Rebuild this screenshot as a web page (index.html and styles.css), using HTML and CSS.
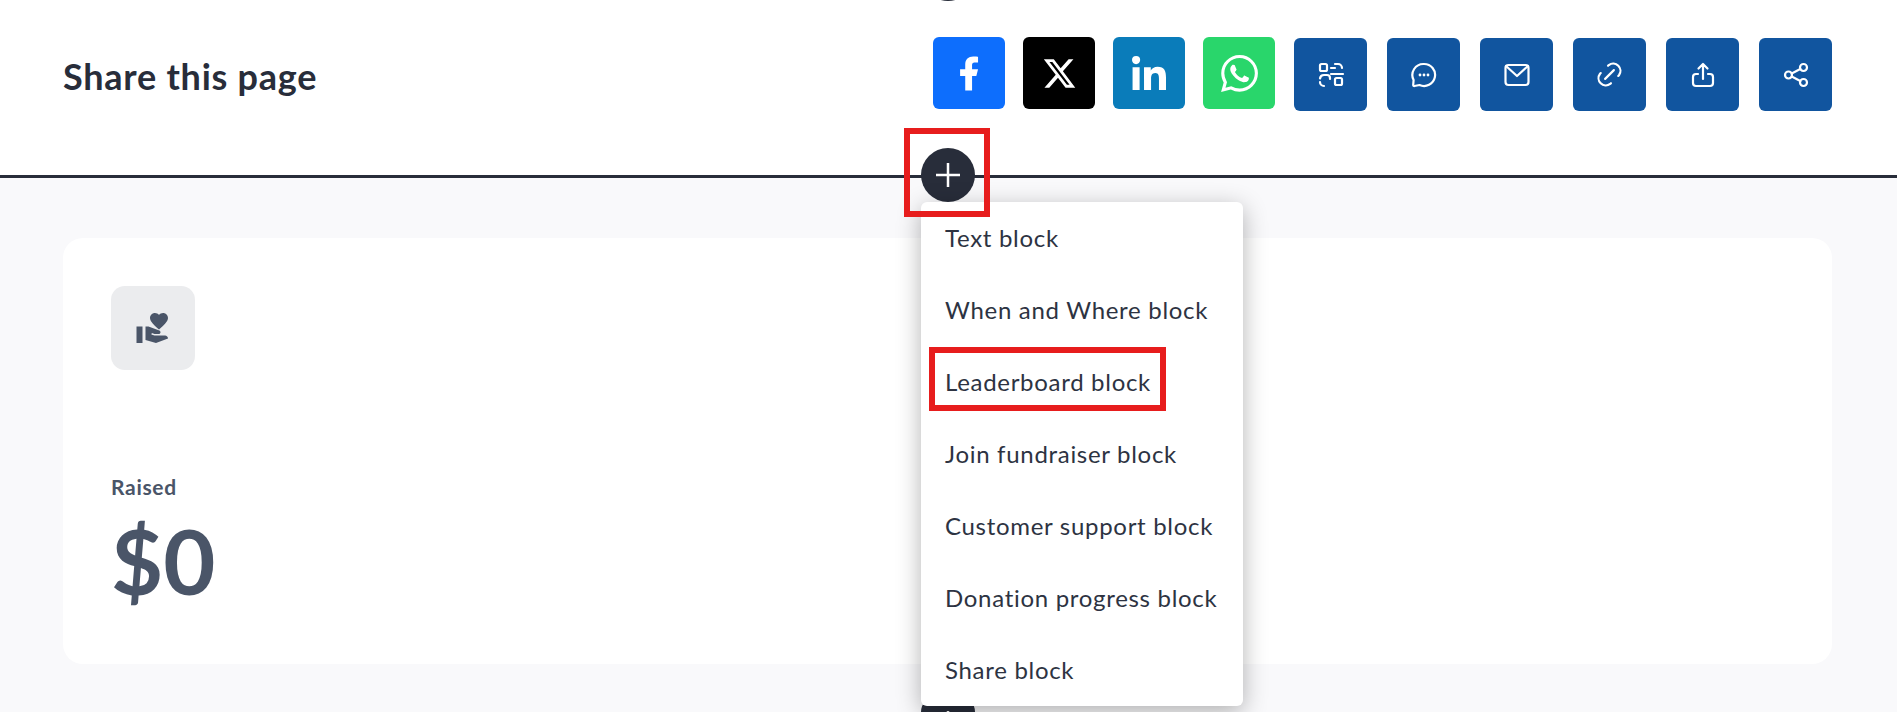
FILE: index.html
```html
<!DOCTYPE html>
<html lang="en">
<head>
    <meta charset="UTF-8">
    <meta name="viewport" content="width=device-width, initial-scale=1.0">
    <title>Share this page</title>
    <link rel="stylesheet" href="styles.css">
</head>
<body>
    <!-- bottom of the add button from the block above -->
    <div class="add-btn add-btn-top"></div>

    <header class="share-bar">
        <h2 class="share-title">Share this page</h2>
        <div class="share-buttons">
            <div class="brand-buttons">
                <a class="share-btn facebook" href="#">
                    <svg width="41" height="41" viewBox="0.5 0 24 24" fill="#fff"><path d="M14 13.5h2.5l1-4H14v-2c0-1.03 0-2 2-2h1.5V2.14c-.326-.043-1.557-.14-2.857-.14C11.928 2 10 3.657 10 6.7v2.8H7v4h3V22h4v-8.5z"/></svg>
                </a>
                <a class="share-btn twitter" href="#">
                    <svg width="35" height="35" viewBox="0 0 24 24" fill="#fff"><path d="M18.244 2.25h3.308l-7.227 8.26 8.502 11.24H16.17l-5.214-6.817L4.99 21.75H1.68l7.73-8.835L1.254 2.25H8.08l4.713 6.231zm-1.161 17.52h1.833L7.084 4.126H5.117z"/></svg>
                </a>
                <a class="share-btn linkedin" href="#">
                    <svg width="34" height="34" viewBox="0 0 448 448" fill="#fff"><path d="M100.28 448H7.4V148.9h92.88zM53.79 108.1C24.09 108.1 0 83.5 0 53.8a53.79 53.79 0 0 1 107.58 0c0 29.7-24.1 54.3-53.79 54.3zM447.9 448h-92.68V302.4c0-34.7-.7-79.2-48.29-79.2-48.29 0-55.69 37.7-55.69 76.7V448h-92.78V148.9h89.08v40.8h1.3c12.4-23.5 42.69-48.3 87.88-48.3 94 0 111.28 61.9 111.28 142.3V448z"/></svg>
                </a>
                <a class="share-btn whatsapp" href="#">
                    <svg width="37" height="37" viewBox="0 0 24 24" fill="#fff"><path d="M17.472 14.382c-.297-.149-1.758-.867-2.03-.967-.273-.099-.471-.148-.67.15-.197.297-.767.966-.94 1.164-.173.199-.347.223-.644.075-.297-.15-1.255-.463-2.39-1.475-.883-.788-1.48-1.761-1.653-2.059-.173-.297-.018-.458.13-.606.134-.133.298-.347.446-.52.149-.174.198-.298.298-.497.099-.198.05-.371-.025-.52-.075-.149-.669-1.612-.916-2.207-.242-.579-.487-.5-.669-.51-.173-.008-.371-.01-.57-.01-.198 0-.52.074-.792.372-.272.297-1.04 1.016-1.04 2.479 0 1.462 1.065 2.875 1.213 3.074.149.198 2.096 3.2 5.077 4.487.709.306 1.262.489 1.694.625.712.227 1.36.195 1.871.118.571-.085 1.758-.719 2.006-1.413.248-.694.248-1.289.173-1.413-.074-.124-.272-.198-.57-.347m-5.421 7.403h-.004a9.87 9.87 0 01-5.031-1.378l-.361-.214-3.741.982.998-3.648-.235-.374a9.86 9.86 0 01-1.51-5.26c.001-5.45 4.436-9.884 9.888-9.884 2.64 0 5.122 1.03 6.988 2.898a9.825 9.825 0 012.893 6.994c-.003 5.45-4.437 9.884-9.885 9.884m8.413-18.297A11.815 11.815 0 0012.05 0C5.495 0 .16 5.335.157 11.892c0 2.096.547 4.142 1.588 5.945L.057 24l6.305-1.654a11.882 11.882 0 005.683 1.448h.005c6.554 0 11.89-5.335 11.893-11.893a11.821 11.821 0 00-3.48-8.413z"/></svg>
                </a>
            </div>
            <div class="tool-buttons">
                <a class="tool-btn" href="#">
                    <svg class="line-icon" width="28" height="28" viewBox="0 0 28 28"><rect x="3" y="3" width="7" height="7" rx="1.5"/><rect x="18" y="17" width="7" height="7" rx="1.5"/><path d="M14 7h4M18 3h3a4 4 0 0 1 4 4M14 13h12M3 21a4 4 0 0 0 4 4M3 17.5a4 4 0 0 1 4-3.5h3a3 3 0 0 1 3 3v1"/></svg>
                </a>
                <a class="tool-btn" href="#">
                    <svg class="line-icon" width="28" height="28" viewBox="0 0 28 28"><path d="M14 3a11 11 0 1 1-4.5 21L4.5 25a1 1 0 0 1-1.3-1L3.6 19A11 11 0 0 1 14 3z"/><circle class="dot" cx="10" cy="14" r="1.4"/><circle class="dot" cx="14" cy="14" r="1.4"/><circle class="dot" cx="18" cy="14" r="1.4"/></svg>
                </a>
                <a class="tool-btn" href="#">
                    <svg class="line-icon" width="28" height="28" viewBox="0 0 28 28"><rect x="2.5" y="4" width="23" height="20" rx="3"/><path d="M3 5l11 10L25 5"/></svg>
                </a>
                <a class="tool-btn" href="#">
                    <svg class="line-icon thin" width="35" height="35" viewBox="0 0 24 24"><path d="M9 15l6-6M11 6l.5-.5a5 5 0 0 1 7 7l-.5.5M13 18l-.5.5a5 5 0 0 1-7-7l.5-.5"/></svg>
                </a>
                <a class="tool-btn" href="#">
                    <svg class="line-icon" width="28" height="28" viewBox="0 0 28 28"><path d="M9 13H7a3 3 0 0 0-3 3v6a3 3 0 0 0 3 3h14a3 3 0 0 0 3-3v-6a3 3 0 0 0-3-3h-2M14 18V3M9.5 7.5L14 3l4.5 4.5"/></svg>
                </a>
                <a class="tool-btn" href="#">
                    <svg class="line-icon" width="28" height="28" viewBox="0 0 28 28"><circle cx="6.5" cy="14" r="3.5"/><circle cx="21.5" cy="6.5" r="3.5"/><circle cx="21.5" cy="21.5" r="3.5"/><path d="M9.7 12.4l8.6-4.3M9.7 15.6l8.6 4.3"/></svg>
                </a>
            </div>
        </div>
    </header>

    <main class="stats-section">
        <section class="stats-card">
            <div class="stats-icon">
                <svg width="36" height="36" viewBox="0 0 24 24" fill="#4a5568"><path d="M1 11h4v11H1zm15-7.75C16.65 2.49 17.66 2 18.7 2 20.55 2 22 3.45 22 5.3c0 2.27-2.91 4.9-6 7.7-3.09-2.81-6-5.44-6-7.7C10 3.45 11.45 2 13.3 2c1.04 0 2.05.49 2.7 1.25zM20 17h-7l-2.09-.73.33-.94L13 16h2.82c.65 0 1.18-.53 1.18-1.18 0-.49-.31-.93-.77-1.11L8.97 11H7v9.02L14 22l8.01-3c-.01-1.1-.9-2-2.01-2z"/></svg>
            </div>
            <div class="stats-label">Raised</div>
            <div class="stats-value">$0</div>
        </section>
    </main>

    <!-- add block button with its open menu -->
    <button class="add-btn add-btn-main">
        <svg width="28" height="28" viewBox="0 0 28 28"><path d="M14 2v24M2 14h24"/></svg>
    </button>

    <button class="add-btn add-btn-next">
        <svg width="28" height="28" viewBox="0 0 28 28"><path d="M14 2v24M2 14h24"/></svg>
    </button>

    <ul class="block-menu">
        <li>Text block</li>
        <li>When and Where block</li>
        <li class="marked">Leaderboard block<span class="note-box note-item"></span></li>
        <li>Join fundraiser block</li>
        <li>Customer support block</li>
        <li>Donation progress block</li>
        <li>Share block</li>
    </ul>

    <div class="note-box note-add"></div>
</body>
</html>
```

FILE: styles.css
```css
html, body {
    height: 712px;
    overflow: hidden;
}
body {
    font-family: Lato, "Noto Sans", sans-serif;
    margin: 0;
    position: relative;
    background: #f9f9fb;
    color: #282d3a;
}
.share-bar {
    display: flex;
    justify-content: space-between;
    align-items: flex-start;
    height: 175px;
    padding: 0 65px 0 63px;
    background: white;
    border-bottom: 3px solid #282d3a;
}
.share-title {
    margin: 0;
    padding-top: 54px;
    font-size: 36px;
    font-weight: 700;
    line-height: 44px;
    letter-spacing: 0.75px;
}
.share-buttons {
    display: flex;
    align-items: flex-start;
    gap: 19px;
    padding-top: 37px;
}
.brand-buttons {
    display: flex;
    gap: 18px;
}
.tool-buttons {
    display: flex;
    gap: 20px;
    margin-top: 1px;
}
.share-btn, .tool-btn {
    display: flex;
    justify-content: center;
    align-items: center;
    border-radius: 6px;
}
.share-btn {
    width: 72px;
    height: 72px;
}
.tool-btn {
    width: 73px;
    height: 73px;
    background-color: #11559f;
}
.facebook { background-color: #0d6efd; }
.twitter { background-color: #000; }
.linkedin { background-color: #0a7cba; }
.whatsapp { background-color: #29d66b; }
.line-icon {
    fill: none;
    stroke: white;
    stroke-width: 2.2;
    stroke-linecap: round;
    stroke-linejoin: round;
}
.line-icon.thin { stroke-width: 1.5; }
.line-icon .dot {
    fill: white;
    stroke: none;
}
.stats-section {
    padding: 60px 65px 0 63px;
}
.stats-card {
    height: 426px;
    box-sizing: border-box;
    padding: 48px;
    background: white;
    border-radius: 20px;
}
.stats-icon {
    display: flex;
    justify-content: center;
    align-items: center;
    width: 84px;
    height: 84px;
    border-radius: 14px;
    background-color: #ebecee;
}
.stats-label {
    margin-top: 103px;
    font-size: 21px;
    font-weight: 700;
    line-height: 28px;
    letter-spacing: 0.7px;
    color: #4a5568;
}
.stats-value {
    margin-top: 3px;
    font-size: 90px;
    font-weight: 700;
    line-height: 112px;
    color: #4a5568;
}
.add-btn {
    position: absolute;
    left: 921px;
    display: flex;
    justify-content: center;
    align-items: center;
    width: 54px;
    height: 54px;
    padding: 0;
    border: none;
    border-radius: 50%;
    background-color: #282d3a;
}
.add-btn svg {
    fill: none;
    stroke: white;
    stroke-width: 2.5;
}
.add-btn-top { top: -53px; }
.add-btn-main { top: 148px; }
/* only the top of this one fits in the window */
.add-btn-next {
    top: 696px;
    height: 16px;
    align-items: flex-start;
    overflow: hidden;
    border-radius: 27px 27px 0 0;
}
.add-btn-next svg { margin-top: 13px; }
.block-menu {
    position: absolute;
    top: 202px;
    left: 921px;
    width: 322px;
    margin: 0;
    padding: 0;
    list-style: none;
    background: white;
    border-radius: 6px;
    box-shadow: 0 6px 24px rgba(0, 0, 0, 0.3);
}
.block-menu li {
    position: relative;
    height: 72px;
    padding-left: 24px;
    font-size: 24px;
    line-height: 72px;
    letter-spacing: 0.7px;
    color: #2d3342;
}
.note-box {
    position: absolute;
    box-sizing: border-box;
    border: 6px solid #e71d1d;
}
.note-add {
    top: 128px;
    left: 904px;
    width: 86px;
    height: 89px;
}
.note-item {
    top: 1px;
    left: 8px;
    width: 237px;
    height: 64px;
}
```
